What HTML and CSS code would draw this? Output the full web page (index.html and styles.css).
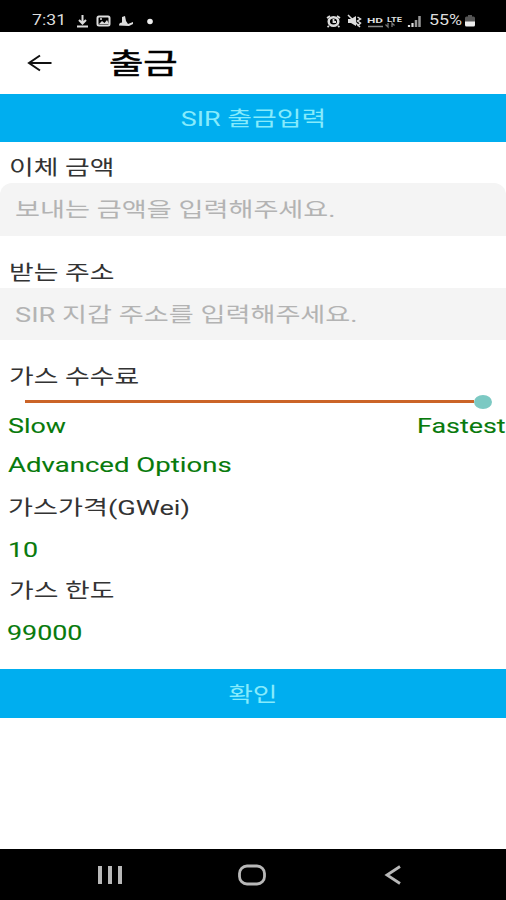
FILE: index.html
```html
<!DOCTYPE html>
<html lang="ko">
<head>
<meta charset="utf-8">
<title>출금</title>
<link rel="stylesheet" href="styles.css">
</head>
<body>
<div class="screen">
  <div class="status">
    <span class="time"><span class="wide">7:31</span></span>
    <svg class="status-left" width="80" height="16" viewBox="0 0 80 16" fill="none" stroke="#ddd">
      <path d="M6.500 2v8M3 7l3.500 3.500L10 7M1 13.500h11" stroke-width="2"/>
      <rect x="21.500" y="3.500" width="12" height="9" rx="1.500" stroke-width="2"/>
      <path d="M23 11l3-3 2.500 2 2.500-3 2 4z" fill="#ddd" stroke="none"/>
      <circle cx="25" cy="6" r="1" fill="#ddd" stroke="none"/>
      <path d="M43 12.500c0-2 1-3 3-3V4l3-1 1 5 2 3 5-2v2l-4 2z" fill="#ddd" stroke="none"/>
      <circle cx="74" cy="8.500" r="2.800" fill="#eee" stroke="none"/>
    </svg>
    <svg class="status-right" width="102" height="16" viewBox="0 0 102 16" fill="none" stroke="#ddd">
      <ellipse cx="7.500" cy="8.500" rx="4.800" ry="4.200" stroke-width="2.500"/>
      <path d="M1 5l3-2M11 3l3 2M7.500 6v3h2.500M3 13l-1.500 1M12 13l1.500 1" stroke-width="1.800"/>
      <path d="M22 6h3l5-3v10l-5-3h-3z" fill="#ddd" stroke="none"/>
      <path d="M22 2l12 12M31.500 4l3 2-3 2 3 2-3 3" stroke-width="1.500"/>
      <path d="M62 10v4l-2.500-2.500M66 14v-4l2.500 2.500" stroke="#777" stroke-width="1.300"/>
      <path d="M42 13.500h15" stroke="#888" stroke-width="1.500"/>
      <path d="M83 14v-2M86.500 14v-4" stroke="#ddd" stroke-width="2.200"/>
      <path d="M90 14V7M93.500 14V3" stroke="#999" stroke-width="2.500"/>
      <text x="41" y="10" class="tag" textLength="16" lengthAdjust="spacingAndGlyphs">HD</text>
      <text x="61" y="9" class="tag" textLength="15" lengthAdjust="spacingAndGlyphs">LTE</text>
    </svg>
    <span class="percent"><span class="wide">55%</span></span>
    <svg class="battery" width="12" height="14" viewBox="0 0 12 14"><path d="M4 1h4v1.500h1.500q1.500 0 1.500 1.500v4H1V4q0-1.500 1.500-1.500H4z" fill="#555"/><path d="M1 7.500h10V11q0 1.500-1.500 1.500h-7Q1 12.500 1 11z" fill="#eee"/></svg>
  </div>
  <header class="appbar">
    <svg width="26" height="18" viewBox="0 0 26 18" fill="none" stroke="#111" stroke-width="2"><path d="M24.500 9H2M13 1.500L2 9l11 7.500"/></svg>
    <h1 class="title"><span class="wide">출금</span></h1>
  </header>
  <div class="banner"><span class="wide center">SIR 출금입력</span></div>
  <main class="form">
    <label class="label first"><span class="wide">이체 금액</span></label>
    <div class="field rounded"><span class="wide">보내는 금액을 입력해주세요.</span></div>
    <label class="label"><span class="wide">받는 주소</span></label>
    <div class="field"><span class="wide">SIR 지갑 주소를 입력해주세요.</span></div>
    <label class="label"><span class="wide">가스 수수료</span></label>
    <div class="slider"><div class="track"></div><div class="knob"></div></div>
    <div class="range"><span class="wide">Slow</span><span class="wide right">Fastest</span></div>
    <div class="row advanced green"><span class="wide">Advanced Options</span></div>
    <div class="row price"><span class="wide">가스가격(GWei)</span></div>
    <div class="row amount green"><span class="wide">10</span></div>
    <div class="row limit"><span class="wide">가스 한도</span></div>
    <div class="row total green"><span class="wide">99000</span></div>
  </main>
  <div class="banner confirm"><span class="wide center">확인</span></div>
  <nav class="nav">
    <svg width="26" height="20" viewBox="0 0 26 20" stroke="#b8b8b8" stroke-width="4"><path d="M3 1v18M13 1v18M23 1v18"/></svg>
    <svg class="home" width="30" height="22" viewBox="0 0 30 22" fill="none" stroke="#b8b8b8" stroke-width="2.800"><rect x="2.500" y="2" width="25" height="18" rx="7.500"/></svg>
    <svg width="18" height="20" viewBox="0 0 18 20" fill="none" stroke="#b8b8b8" stroke-width="2.800"><path d="M16 1.500L3 10l13 8.500"/></svg>
  </nav>
</div>
</body>
</html>
```
FILE: styles.css
```css
* { box-sizing: border-box; }
body { margin: 0; background: #fff; }
.screen {
  width: 506px; height: 900px; display: flex; flex-direction: column; overflow: hidden;
  font-family: Roboto, "Noto Sans CJK KR", sans-serif; font-size: 20.5px; line-height: 24px; color: #333; white-space: nowrap;
}
.wide { display: inline-block; transform: scaleX(1.31); transform-origin: left center; }
.center { transform-origin: center; }
.right { transform-origin: right center; }
.status { height: 32px; flex: none; background: #000; color: #ddd; display: flex; align-items: center; padding: 9px 0 0 32px; font-size: 14.5px; line-height: 16px; }
.time { width: 44px; }
.time .wide { transform: scaleX(1.22); }
.status-left { margin-right: 170px; }
.status-right { flex: none; }
.percent { width: 36px; margin-left: 1px; }
.percent .wide { transform: scaleX(1.23); }
.battery { flex: none; margin-left: -1px; }
.tag { font: bold 8px Roboto, sans-serif; fill: #ddd; stroke: none; }
.appbar { height: 62px; flex: none; display: flex; align-items: center; padding-left: 27px; }
.title { margin: 0 0 0 56px; padding-top: 4px; font-size: 28.5px; line-height: 40px; font-weight: 400; color: #000; -webkit-text-stroke: 0.6px #000; }
.banner { height: 48px; flex: none; padding-top: 2px; background: #00aeef; color: #86ebfc; display: flex; align-items: center; justify-content: center; }
.form { height: 527px; flex: none; padding-top: 10px; }
.label { height: 34px; margin-top: 18px; padding: 3px 0 0 9px; display: flex; align-items: center; }
.first { height: 31px; margin-top: 0; padding-top: 1px; }
.field { height: 52px; background: #f4f4f4; color: #b3b3b3; padding: 1px 0 0 15px; display: flex; align-items: center; }
.field .wide { transform: scaleX(1.325); }
.rounded { height: 53px; border-radius: 12px 12px 0 0; }
.slider { height: 18px; display: flex; align-items: center; padding: 1px 0 0 25px; }
.track { width: 449px; height: 2.500px; background: #cb6428; }
.knob { width: 18px; height: 14px; border-radius: 50%; background: #7cc9c3; }
.range { height: 30px; display: flex; align-items: center; justify-content: space-between; padding: 2px 0 0 8px; }
.range, .green { color: #087a0c; -webkit-text-stroke: 0.1px #087a0c; }
.row { display: flex; align-items: center; padding: 3px 0 0 8px; height: 42px; }
.advanced { height: 46px; }
.advanced .wide { transform: scaleX(1.345); }
.price { height: 40px; }
.price .wide { transform: scaleX(1.325); }
.amount { height: 44px; }
.limit { height: 38px; padding-left: 9px; }
.total { height: 46px; padding-left: 7px; }
.confirm { height: 49px; }
.nav { margin-top: auto; height: 51px; flex: none; background: #000; display: flex; align-items: center; justify-content: space-between; padding: 0 104px 0 97px; }
.home { margin-right: 4px; }
```
